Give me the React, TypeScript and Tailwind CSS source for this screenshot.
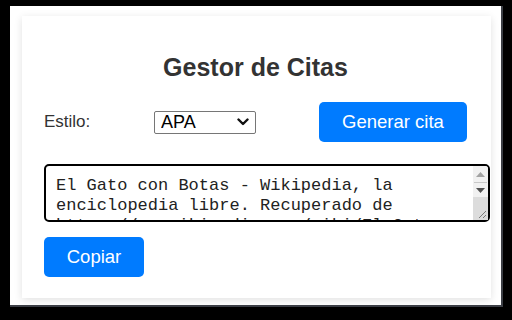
import React from "react"

const citation =
  "El Gato con Botas - Wikipedia, la enciclopedia libre. Recuperado de https://es.wikipedia.org/wiki/El_Gato_con_Botas"

function FakeScrollbar() {
  // classic windows-style scrollbar drawn over the textarea edge
  return (
    <div className="absolute top-[2px] right-[2px] bottom-[2px] w-[15px] flex flex-col bg-[#f1f1f1] rounded-tr-[3px] rounded-br-[3px]">
      <div className="h-[16px] flex items-center justify-center">
        <svg width="9" height="5" viewBox="0 0 9 5">
          <path d="M0 5 L4.5 0 L9 5 Z" fill="#a3a3a3" />
        </svg>
      </div>
      <div className="h-[1px] mx-[1px] bg-[#c8c8c8]" />
      <div className="h-[14px] flex items-center justify-center">
        <svg width="9" height="5" viewBox="0 0 9 5">
          <path d="M0 0 L4.5 5 L9 0 Z" fill="#505050" />
        </svg>
      </div>
      <div className="flex-1 bg-[#dcdcdc] relative">
        <svg className="absolute right-[1px] bottom-[1px]" width="10" height="10" viewBox="0 0 10 10">
          <path d="M9 2 L2 9 M9 6 L6 9" stroke="#7a7a7a" strokeWidth="1" />
        </svg>
      </div>
    </div>
  )
}

export default function App() {
  return (
    <div className="w-[512px] h-[320px] bg-black pt-[6px] pl-[10px] font-['Liberation_Sans',Arial,sans-serif]">
      <div className="w-[493px] h-[301px] bg-white border-r-2 border-b-2 border-[#3c3f46] pt-[10px] pl-[12px]">
        <div className="w-[469px] h-[282px] bg-white shadow-[0_2px_8px_rgba(0,0,0,0.12)] pl-[22px] pr-[24px] flex flex-col">
          <h1 className="mt-[37px] text-center text-[25px] leading-[28px] font-bold text-[#333]">
            Gestor de Citas
          </h1>

          <div className="mt-[21px] flex items-center h-[40px]">
            <label className="w-[110px] text-[17px] text-[#333]">Estilo:</label>
            <div className="relative w-[102px] h-[23px]">
              <select
                defaultValue="APA"
                className="appearance-none w-full h-full text-[18px] leading-[20px] text-black border border-[#767676] rounded-[2px] bg-white pl-[6px] outline-none"
              >
                <option>APA</option>
                <option>MLA</option>
                <option>Chicago</option>
              </select>
              <svg
                className="absolute right-[7px] top-[7px] pointer-events-none"
                width="12"
                height="8"
                viewBox="0 0 12 8"
              >
                <path d="M1.5 1.5 L6 6 L10.5 1.5" fill="none" stroke="#111" strokeWidth="2.4" strokeLinecap="round" strokeLinejoin="round" />
              </svg>
            </div>
            <button className="ml-auto w-[148px] h-[40px] rounded-[5px] bg-[#007bff] text-white text-[18.5px]">
              Generar cita
            </button>
          </div>

          <div className="relative mt-[22px] w-[446px] h-[58px]">
            <textarea
              readOnly
              defaultValue={citation}
              className="block w-full h-full border-2 border-black rounded-[5px] pl-[10px] pr-[17px] pt-[10px] font-['Liberation_Mono','DejaVu_Sans_Mono',monospace] text-[17px] leading-[20px] text-[#222] resize-none overflow-y-scroll outline-none [scrollbar-width:none]"
            />
            <FakeScrollbar />
          </div>

          <button className="mt-[15px] w-[100px] h-[40px] rounded-[5px] bg-[#007bff] text-white text-[18.5px]">
            Copiar
          </button>
        </div>
      </div>
    </div>
  )
}
